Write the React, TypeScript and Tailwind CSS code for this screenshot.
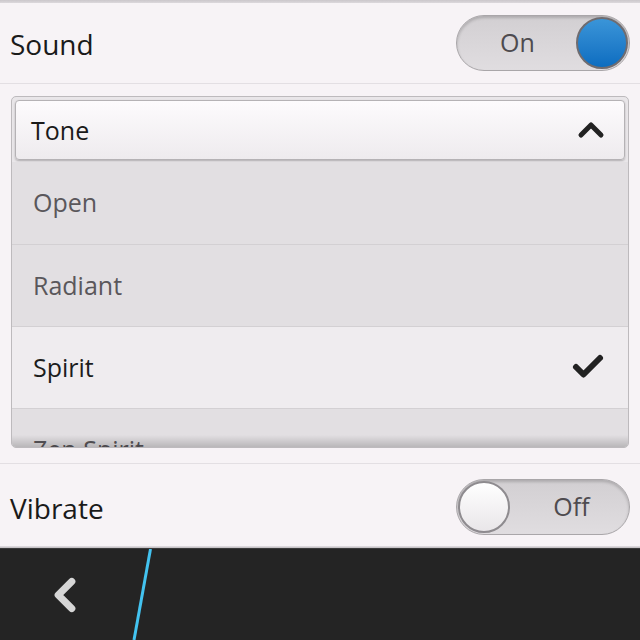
import { Check, ChevronUp, ChevronLeft } from 'lucide-react'

const tones = [
    { name: 'Open', selected: false },
    { name: 'Radiant', selected: false },
    { name: 'Spirit', selected: true },
    { name: 'Zen Spirit', selected: false },
]

function Toggle({ on }: { on: boolean }) {
    return (
        <div className="relative w-[174px] h-[56px] rounded-full border border-[#a9a6a9] bg-gradient-to-b from-[#d2cfd2] to-[#e0dde0] shadow-[inset_0_2px_3px_rgba(0,0,0,0.18)] flex items-center">
            {on ? (
                <>
                    <span className="flex-1 text-center pl-[2px] text-[25px] text-[#4e4b4f]">On</span>
                    <div className="w-[52px] h-[52px] mr-[1px] rounded-full border-2 border-[#6f6c70] bg-gradient-to-b from-[#3a95d8] to-[#0b6dc0]" />
                </>
            ) : (
                <>
                    <div className="w-[52px] h-[52px] ml-[1px] rounded-full border-2 border-[#8e8b8f] bg-gradient-to-b from-[#ffffff] to-[#e9e6e9]" />
                    <span className="flex-1 text-center pl-[4px] text-[25px] text-[#4e4b4f]">Off</span>
                </>
            )}
        </div>
    )
}

export default function App() {
    return (
        <div className="w-[640px] h-[640px] overflow-hidden flex flex-col bg-[#f7f3f6] font-['Open_Sans',sans-serif]">
            {/* top edge */}
            <div className="h-[3px] bg-gradient-to-b from-[#cbc7cb] to-[#dcd8dc]" />

            {/* Sound */}
            <div className="h-[81px] flex items-center justify-between pl-[10px] pr-[10px] border-b border-[#e3dfe3]">
                <span className="text-[28px] text-[#1a1a1a] pt-[3px]">Sound</span>
                <Toggle on={true} />
            </div>

            {/* Tone dropdown */}
            <div className="mt-[12px] mx-[11px] h-[353px] rounded-[5px] border border-[#bdbabd] bg-[#e9e6e9] overflow-hidden flex flex-col relative">
                <div className="shrink-0 m-[3px] h-[60px] rounded-[4px] border border-[#b5b2b5] bg-gradient-to-b from-[#fdfbfd] to-[#eeebee] shadow-[0_1px_2px_rgba(0,0,0,0.25)] flex items-center justify-between pl-[15px] pr-[13px]">
                    <span className="text-[25px] text-[#1a1a1a] pt-[2px]">Tone</span>
                    <ChevronUp className="w-[40px] h-[40px] text-[#222]" strokeWidth={3} />
                </div>
                <div className="flex flex-col -mt-[1px]">
                    {tones.map((t, i) => (
                        <div
                            key={t.name}
                            className={`shrink-0 h-[82px] flex items-center justify-between pl-[21px] pr-[22px] ${i > 0 ? 'border-t border-[#d3d0d3]' : ''} ${t.selected ? 'bg-[#efecef]' : 'bg-[#e2dfe2]'}`}
                        >
                            <span className={`text-[25px] ${t.selected ? 'text-[#1c1c1c]' : 'text-[#5a575b]'}`}>{t.name}</span>
                            {t.selected && <Check className="w-[36px] h-[36px] text-[#222]" strokeWidth={4} />}
                        </div>
                    ))}
                </div>
                <div className="absolute left-0 right-0 bottom-0 h-[12px] bg-gradient-to-b from-transparent to-[rgba(0,0,0,0.18)]" />
            </div>

            {/* Vibrate */}
            <div className="mt-[15px] h-[83px] pt-[4px] flex items-center justify-between pl-[10px] pr-[10px] border-t border-[#e3dfe3]">
                <span className="text-[28px] text-[#1a1a1a] pt-[2px]">Vibrate</span>
                <Toggle on={false} />
            </div>

            <div className="h-[2px] bg-gradient-to-b from-[#e6e2e6] to-[#bdb9bd]" />

            {/* bottom action bar */}
            <div className="flex-1 bg-[#242424] border-t border-[#3a3a3a] flex items-stretch">
                <div className="w-[131px] flex items-center justify-center pr-[2px]">
                    <ChevronLeft className="w-[54px] h-[54px] text-[#d6d6d6]" strokeWidth={3.2} />
                </div>
                <svg width="22" height="91" viewBox="0 0 22 91" className="shrink-0">
                    <line x1="19.5" y1="0" x2="3" y2="91" stroke="#43c3f0" strokeWidth="3" />
                </svg>
            </div>
        </div>
    )
}
